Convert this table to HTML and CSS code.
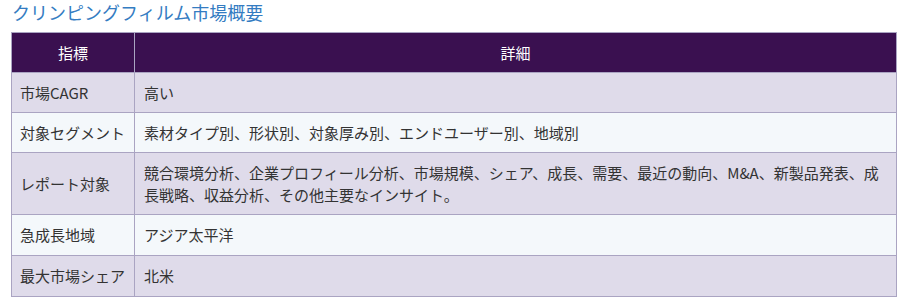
FILE: index.html
```html
<!DOCTYPE html>
<html lang="ja">
<head>
<meta charset="utf-8">
<link rel="stylesheet" href="styles.css">
</head>
<body>
<div class="wrap">
  <h3 class="title">クリンピングフィルム市場概要</h3>
  <table class="summary">
    <thead>
      <tr><th class="c1">指標</th><th>詳細</th></tr>
    </thead>
    <tbody>
      <tr class="odd"><td class="c1">市場CAGR</td><td>高い</td></tr>
      <tr class="even"><td class="c1">対象セグメント</td><td>素材タイプ別、形状別、対象厚み別、エンドユーザー別、地域別</td></tr>
      <tr class="odd"><td class="c1">レポート対象</td><td>競合環境分析、企業プロフィール分析、市場規模、シェア、成長、需要、最近の動向、M&amp;A、新製品発表、成長戦略、収益分析、その他主要なインサイト。</td></tr>
      <tr class="even tall"><td class="c1">急成長地域</td><td>アジア太平洋</td></tr>
      <tr class="odd tall"><td class="c1">最大市場シェア</td><td>北米</td></tr>
    </tbody>
  </table>
</div>
</body>
</html>
```
FILE: styles.css
```css
html, body {
  margin: 0;
  padding: 0;
  background: #ffffff;
}
body {
  font-family: "Noto Sans CJK JP", "Noto Sans", sans-serif;
  color: #333333;
}
.wrap {
  padding: 0 8px 0 11px;
}
.title {
  margin: 0 0 8px 1px;
  font-size: 18px;
  line-height: 24px;
  font-weight: 400;
  color: #347cc2;
}
.summary {
  width: 886px;
  border-collapse: collapse;
  font-size: 15px;
  line-height: 22px;
}
.summary th,
.summary td {
  border: 1px solid #aaa4c2;
  padding: 9px 9px 8px 9px;
  text-align: left;
  vertical-align: middle;
}
.summary .tall td {
  padding-bottom: 9px;
}
.summary th {
  background: #3a1050;
  color: #ffffff;
  font-weight: 400;
  text-align: center;
}
.summary .c1 {
  width: 103px;
  padding-left: 8px;
  white-space: nowrap;
}
.summary th.c1 {
  padding-left: 9px;
}
.odd td {
  background: #dfdbea;
}
.even td {
  background: #f4f8fb;
}
```
